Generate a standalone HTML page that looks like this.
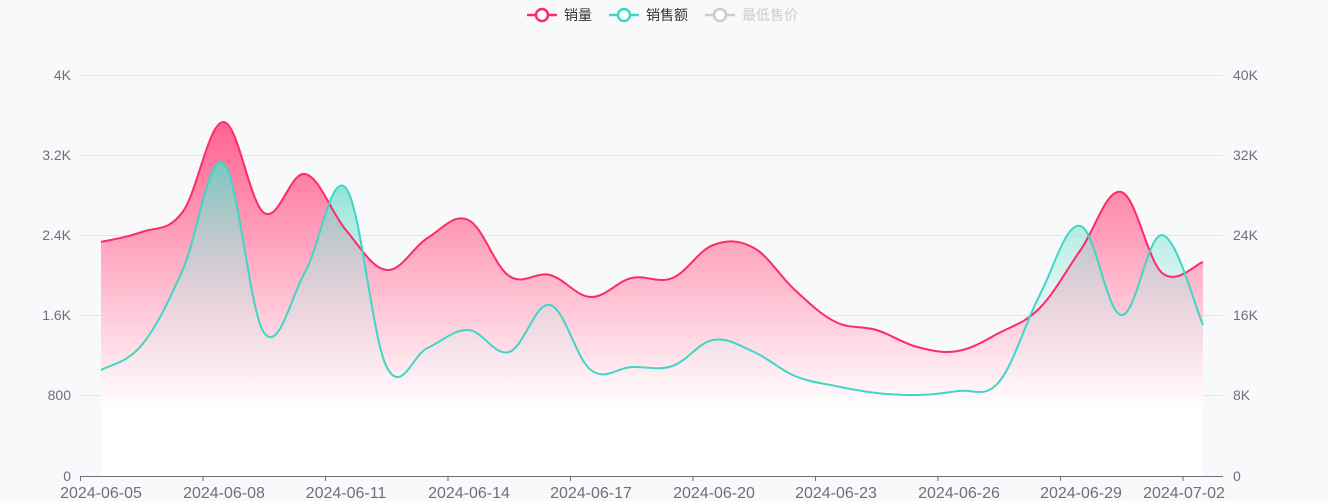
<!DOCTYPE html>
<html><head><meta charset="utf-8"><style>
body{margin:0;background:#f8f9fb;width:1328px;height:501px;overflow:hidden;font-family:"Liberation Sans","Noto Sans CJK SC",sans-serif}
</style></head><body>
<svg id="s" width="1328" height="501" xmlns="http://www.w3.org/2000/svg" style="position:absolute;left:0;top:0">
<defs>
<linearGradient id="gr" gradientUnits="userSpaceOnUse" x1="0" y1="120" x2="0" y2="408">
<stop offset="0" stop-color="#ff5a8a" stop-opacity="0.95"/><stop offset="1" stop-color="#ffffff" stop-opacity="1"/></linearGradient>
<linearGradient id="gt" gradientUnits="userSpaceOnUse" x1="0" y1="160" x2="0" y2="408">
<stop offset="0" stop-color="#5fd8c8" stop-opacity="0.85"/><stop offset="1" stop-color="#ffffff" stop-opacity="0"/></linearGradient>
</defs>
<g stroke="#e0e6f1" stroke-width="1">
<line x1="80" x2="1223" y1="75.5" y2="75.5"/><line x1="80" x2="1223" y1="155.5" y2="155.5"/><line x1="80" x2="1223" y1="235.5" y2="235.5"/><line x1="80" x2="1223" y1="315.5" y2="315.5"/><line x1="80" x2="1223" y1="395.5" y2="395.5"/>
</g>
<rect x="101" y="404" width="1102" height="72" fill="#fff"/>
<path id="rf" fill="url(#gr)"/>
<path id="tf" fill="url(#gt)"/>
<path id="rl" fill="none" stroke="#ff2a68" stroke-width="2"/>
<path id="tl" fill="none" stroke="#3fd6c6" stroke-width="2"/>
<line x1="80" x2="1223" y1="476.5" y2="476.5" stroke="#6e7079"/>
<g stroke="#6e7079"><line x1="80.5" x2="80.5" y1="476" y2="481"/><line x1="203" x2="203" y1="476" y2="481"/><line x1="325.5" x2="325.5" y1="476" y2="481"/><line x1="448" x2="448" y1="476" y2="481"/><line x1="570.5" x2="570.5" y1="476" y2="481"/><line x1="693" x2="693" y1="476" y2="481"/><line x1="815.5" x2="815.5" y1="476" y2="481"/><line x1="938" x2="938" y1="476" y2="481"/><line x1="1060.5" x2="1060.5" y1="476" y2="481"/><line x1="1183" x2="1183" y1="476" y2="481"/></g>
<g font-size="14" fill="#6e7079" text-anchor="end">
<text x="71" y="80">4K</text><text x="71" y="160">3.2K</text><text x="71" y="240">2.4K</text><text x="71" y="320">1.6K</text><text x="71" y="400">800</text><text x="71" y="481">0</text></g>
<g font-size="14" fill="#6e7079">
<text x="1233" y="80">40K</text><text x="1233" y="160">32K</text><text x="1233" y="240">24K</text><text x="1233" y="320">16K</text><text x="1233" y="400">8K</text><text x="1233" y="481">0</text></g>
<g font-size="16" fill="#6e7079" text-anchor="middle">
<text x="101" y="498">2024-06-05</text><text x="224" y="498">2024-06-08</text><text x="346" y="498">2024-06-11</text><text x="469" y="498">2024-06-14</text><text x="591" y="498">2024-06-17</text><text x="714" y="498">2024-06-20</text><text x="836" y="498">2024-06-23</text><text x="959" y="498">2024-06-26</text><text x="1081" y="498">2024-06-29</text><text x="1184" y="498">2024-07-02</text></g>
<g stroke-width="2.5" fill="#fff">
<line x1="527" x2="557" y1="15" y2="15" stroke="#ff2a68"/><circle cx="542" cy="15" r="6" stroke="#ff2a68"/>
<line x1="609" x2="639" y1="15" y2="15" stroke="#3fd6c6"/><circle cx="624" cy="15" r="6" stroke="#3fd6c6"/>
<line x1="705" x2="735" y1="15" y2="15" stroke="#ccc"/><circle cx="720" cy="15" r="6" stroke="#ccc"/></g>
<g font-size="14">
<text x="564" y="20" fill="#333">销量</text><text x="646" y="20" fill="#333">销售额</text><text x="742" y="20" fill="#ccc">最低售价</text></g>
</svg>
<script>
var R=[242,232,212,122,213,174,230,270,238,220,276,275,297,278,278,245,248,290,322,330,347,351,333,308,250,192,273,262];
var T=[370,345,270,163,333,272,188,367,348,330,352,305,370,367,366,340,352,376,386,393,395,391,382,295,226,315,235,325];
function path(Y){var n=Y.length,P=[];for(var i=0;i<n;i++)P.push([101+i*(1102/27),Y[i]]);
var d="M"+P[0][0]+","+P[0][1],k=0.18;
for(var i=0;i<n-1;i++){var p0=P[Math.max(0,i-1)],p1=P[i],p2=P[i+1],p3=P[Math.min(n-1,i+2)];
var c1x=p1[0]+(p2[0]-p0[0])*k,c1y=p1[1]+(p2[1]-p0[1])*k,c2x=p2[0]-(p3[0]-p1[0])*k,c2y=p2[1]-(p3[1]-p1[1])*k;
d+=" C"+c1x+","+c1y+" "+c2x+","+c2y+" "+p2[0]+","+p2[1];}return d;}
var r=path(R),t=path(T);
document.getElementById("rl").setAttribute("d",r);document.getElementById("tl").setAttribute("d",t);
document.getElementById("rf").setAttribute("d",r+" L1203,476 L101,476Z");document.getElementById("tf").setAttribute("d",t+" L1203,476 L101,476Z");
</script>
</body></html>
